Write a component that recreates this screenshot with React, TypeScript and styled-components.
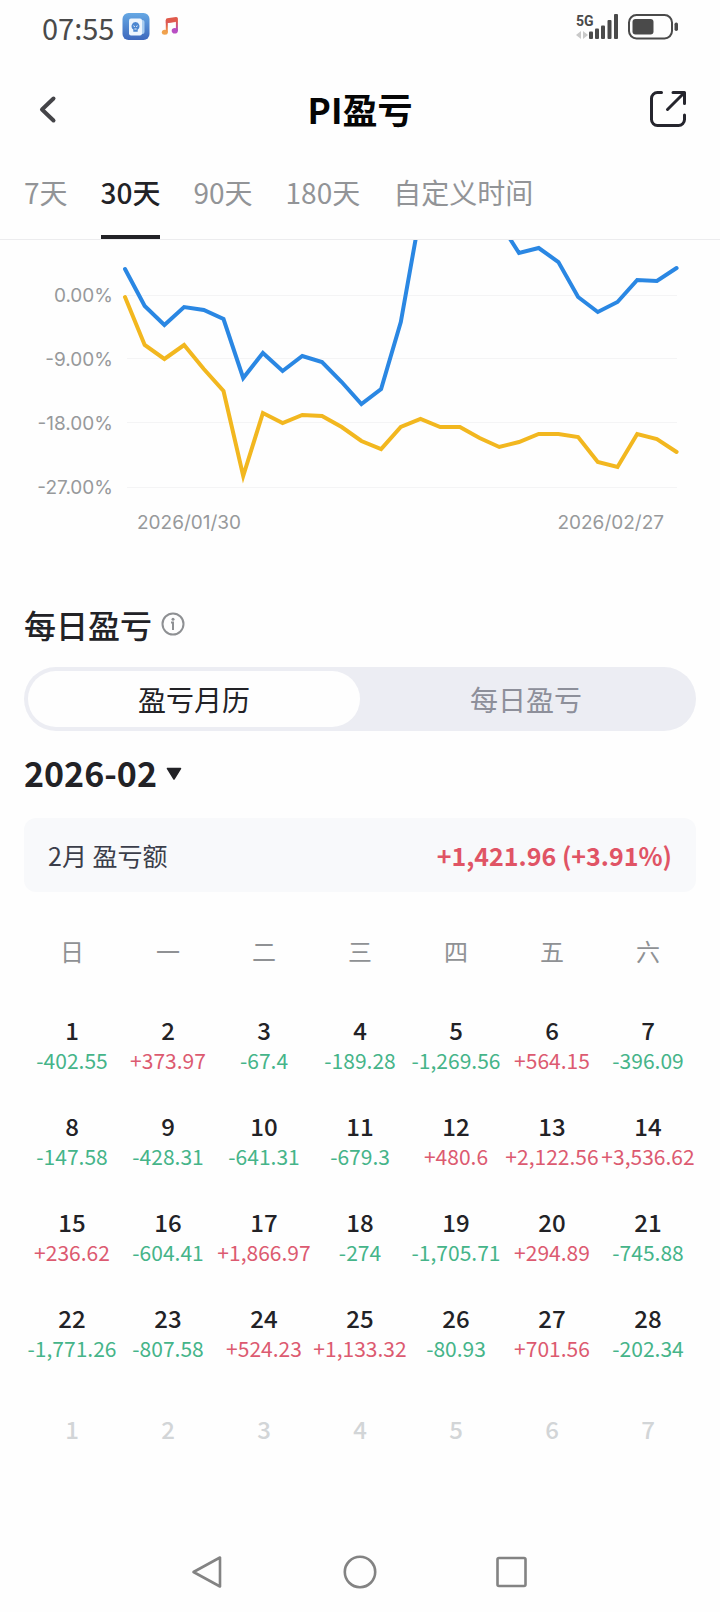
import React, { useState } from "react";
import styled, { createGlobalStyle } from "styled-components";

const GlobalStyle = createGlobalStyle`
  *, *::before, *::after { box-sizing: border-box; }
  body {
    margin: 0;
    background: #fefefe;
    color: #222226;
    font-family: "Noto Sans CJK SC", "Noto Sans", sans-serif;
  }
  button, select {
    margin: 0;
    padding: 0;
    border: 0;
    background: none;
    color: inherit;
    font: inherit;
    cursor: pointer;
  }
  svg { display: block; flex: none; }
`;

const Screen = styled.div`
  display: flex;
  flex-direction: column;
  min-height: 100vh;
`;

const StatusBar = styled.div`
  display: flex;
  align-items: center;
  height: 54px;
  padding: 0 41px 0 42px;
  gap: 8px;
`;

const Clock = styled.time`
  color: #4a4a4a;
  font-size: 29px;
  line-height: 40px;
  font-weight: 400;
`;

const StatusRight = styled.div`
  display: flex;
  align-items: center;
  gap: 9px;
  margin-left: auto;
`;

const Header = styled.header`
  display: grid;
  grid-template-columns: 1fr auto 1fr;
  align-items: center;
  height: 110px;
  padding: 0 32px;
`;

const Title = styled.h1`
  margin: 0;
  color: #050505;
  font-size: 35px;
  line-height: 48px;
  font-weight: 700;
`;

const IconButton = styled.button<{ $end?: boolean }>`
  display: flex;
  justify-self: ${(p) => (p.$end ? "end" : "start")};
`;

const Tabs = styled.nav`
  display: flex;
  gap: 33px;
  height: 76px;
  padding: 0 24px;
  border-bottom: 1px solid #ececee;
`;

const Tab = styled.button<{ $active: boolean }>`
  display: flex;
  align-items: flex-start;
  padding-top: 8px;
  border-bottom: 4px solid ${(p) => (p.$active ? "#222226" : "transparent")};
  color: ${(p) => (p.$active ? "#222226" : "#929497")};
  font-size: 28px;
  line-height: 40px;
  font-weight: ${(p) => (p.$active ? 500 : 400)};
  white-space: nowrap;
`;

const ChartSection = styled.section`
  color: #97999b;
  font-family: Inter, "Noto Sans CJK SC", sans-serif;
  font-size: 19px;
  line-height: 24px;
`;

const ChartBody = styled.div`
  display: grid;
  grid-template-columns: 89px 1fr;
  gap: 8px;
  padding: 0 39px 0 24px;
`;

const Axis = styled.div`
  display: flex;
  flex-direction: column;
  gap: 40px;
  padding-top: 44px;
  text-align: right;
`;

const Plot = styled.svg`
  width: 100%;
  height: 260px;
`;

const Dates = styled.div`
  display: flex;
  justify-content: space-between;
  padding: 11px 56px 0 137px;
`;

const Daily = styled.section`
  padding: 69px 24px 0;
`;

const HeadingRow = styled.div`
  display: flex;
  align-items: center;
  gap: 8px;
`;

const Heading = styled.h2`
  margin: 0;
  font-size: 32px;
  line-height: 40px;
  font-weight: 500;
`;

const Segmented = styled.div`
  display: grid;
  grid-template-columns: 1fr 1fr;
  height: 64px;
  margin-top: 23px;
  padding: 4px;
  border-radius: 32px;
  background: #ecedf3;
`;

const Segment = styled.button<{ $active: boolean }>`
  border-radius: 28px;
  background: ${(p) => (p.$active ? "#fefefe" : "transparent")};
  color: ${(p) => (p.$active ? "#222226" : "#8d8f9a")};
  font-size: 28px;
  line-height: 40px;
`;

const MonthRow = styled.div`
  display: flex;
  align-items: center;
  gap: 9px;
  margin-top: 22px;
`;

const MonthSelect = styled.select`
  appearance: none;
  height: 40px;
  font-size: 34px;
  line-height: 40px;
  font-weight: 700;
`;

const Summary = styled.div`
  display: flex;
  align-items: center;
  justify-content: space-between;
  height: 74px;
  margin-top: 25px;
  padding: 0 24px;
  border-radius: 12px;
  background: #f8f9fb;
  font-size: 25px;
  line-height: 32px;
`;

const SummaryLabel = styled.span`
  color: #3b3e4a;
`;

const SummaryValue = styled.strong`
  color: #e05465;
  font-weight: 700;
`;

const Calendar = styled.table`
  width: 100%;
  margin-top: 13px;
  border-collapse: collapse;
  table-layout: fixed;
  text-align: center;
`;

const Weekday = styled.th`
  height: 92px;
  padding: 0;
  color: #8f9194;
  font-size: 24px;
  line-height: 32px;
  font-weight: 400;
`;

const DayCell = styled.td`
  height: 96px;
  padding: 0;
  white-space: nowrap;
  vertical-align: middle;
`;

const DayNumber = styled.div<{ $faded?: boolean }>`
  color: ${(p) => (p.$faded ? "#d2d5d7" : "#222226")};
  font-size: 24px;
  line-height: 30px;
  font-weight: 500;
`;

const DayValue = styled.div<{ $gain: boolean }>`
  display: flex;
  justify-content: center;
  color: ${(p) => (p.$gain ? "#dc5a70" : "#45b489")};
  font-size: 21px;
  line-height: 30px;
`;

const SystemNav = styled.nav`
  display: flex;
  justify-content: center;
  gap: 104px;
  margin-top: auto;
`;

const NavButton = styled.button`
  display: flex;
  align-items: center;
  justify-content: center;
  width: 48px;
  height: 80px;
`;

const ranges = ["7天", "30天", "90天", "180天", "自定义时间"];
const segments = ["盈亏月历", "每日盈亏"];
const axisLabels = ["0.00%", "-9.00%", "-18.00%", "-27.00%"];
const weekdays = ["日", "一", "二", "三", "四", "五", "六"];

const weeks = [
  ["-402.55", "+373.97", "-67.4", "-189.28", "-1,269.56", "+564.15", "-396.09"],
  ["-147.58", "-428.31", "-641.31", "-679.3", "+480.6", "+2,122.56", "+3,536.62"],
  ["+236.62", "-604.41", "+1,866.97", "-274", "-1,705.71", "+294.89", "-745.88"],
  ["-1,771.26", "-807.58", "+524.23", "+1,133.32", "-80.93", "+701.56", "-202.34"],
];

const blueSeries = [
  29, 66, 85, 67, 70, 79, 138, 113, 131, 116, 122, 142, 164, 149, 82, -28, -60, -6, -40, -18, 13, 8,
  22, 57, 72, 62, 40, 41, 28,
];
const yellowSeries = [
  57, 105, 119, 105, 129, 151, 236, 173, 183, 175, 176, 187, 201, 209, 187, 179, 187, 187, 198, 207,
  202, 194, 194, 197, 222, 227, 194, 199, 212,
];

const toPoints = (ys: number[]) => ys.map((y, i) => `${(4 + i * 19.7).toFixed(1)},${y}`).join(" ");

function AppBadge() {
  return (
    <svg width="28" height="28" viewBox="0 0 28 28" aria-hidden="true">
      <defs>
        <linearGradient id="badge" x1="0" y1="0" x2="0" y2="1">
          <stop offset="0" stopColor="#66a8e4" />
          <stop offset="1" stopColor="#3d68bd" />
        </linearGradient>
      </defs>
      <rect x="0.5" y="0" width="27" height="27" rx="6" fill="url(#badge)" />
      <rect x="10" y="7" width="12.5" height="14" rx="2" fill="#a9cdf0" />
      <rect x="7" y="5.5" width="13" height="17" rx="2" fill="#edf5fd" />
      <path d="M13.5 9a4.200 4.200 0 0 0-2.200 7.600v2.200h4.400v-2.200a4.200 4.200 0 0 0-2.200-7.600z" fill="#4b86d0" />
      <path d="M11.400 12.800l1.500.8M15.600 12.800l-1.500.8M12.400 16h2.200" stroke="#edf5fd" strokeWidth="1" />
    </svg>
  );
}

function MusicBadge() {
  return (
    <svg width="28" height="28" viewBox="0 0 28 28" aria-hidden="true">
      <defs>
        <linearGradient id="noteLeft" x1="0" y1="0" x2="0" y2="1">
          <stop offset="0.4" stopColor="#e05a4c" />
          <stop offset="1" stopColor="#f0a24d" />
        </linearGradient>
        <linearGradient id="noteRight" x1="0" y1="0" x2="0" y2="1">
          <stop offset="0.3" stopColor="#e05a4c" />
          <stop offset="1" stopColor="#b04ac6" />
        </linearGradient>
      </defs>
      <ellipse cx="6.800" cy="19.300" rx="3" ry="2.500" fill="#f0a24d" />
      <ellipse cx="16.800" cy="17.800" rx="3.100" ry="2.800" fill="#b94fc4" />
      <path d="M7.800 7v12.300h2V10l8-1V6z" fill="url(#noteLeft)" />
      <path d="M7.800 7Q7.800 5.600 9.200 5.300L18 4Q19.900 3.900 19.900 5.600V17.800H17.900V8.600L7.800 10.200z" fill="url(#noteRight)" />
    </svg>
  );
}

function Signal() {
  return (
    <svg width="43" height="28" viewBox="0 0 43 28" aria-hidden="true">
      <text x="0" y="13" fill="#4a4a4a" fontFamily="Roboto, sans-serif" fontSize="14" fontWeight="700">
        5G
      </text>
      <path d="M5 18v8L0 22zM7 18v8l5-4z" fill="#c9c9c9" />
      <g fill="#4a4a4a">
        <rect x="13" y="18.500" width="4" height="7.500" rx="1" />
        <rect x="19" y="15.500" width="4" height="10.500" rx="1" />
        <rect x="25" y="12.500" width="4" height="13.500" rx="1" />
        <rect x="31.500" y="7" width="4" height="19" rx="1" />
        <rect x="38" y="1" width="4" height="25" rx="1" />
      </g>
    </svg>
  );
}

function Battery() {
  return (
    <svg width="51" height="28" viewBox="0 0 51 28" aria-hidden="true">
      <rect x="1" y="2" width="43" height="23.500" rx="7.500" fill="none" stroke="#4a4a4a" strokeWidth="2" />
      <rect x="4.500" y="6" width="21" height="15.500" rx="3" fill="#4a4a4a" />
      <rect x="46.500" y="9.500" width="3.500" height="8.500" rx="1.700" fill="#4a4a4a" />
    </svg>
  );
}

export default function App() {
  const [range, setRange] = useState("30天");
  const [segment, setSegment] = useState("盈亏月历");

  return (
    <Screen>
      <GlobalStyle />
      <StatusBar>
        <Clock>07:55</Clock>
        <AppBadge />
        <MusicBadge />
        <StatusRight>
          <Signal />
          <Battery />
        </StatusRight>
      </StatusBar>

      <Header>
        <IconButton aria-label="返回">
          <svg width="32" height="40" viewBox="0 0 32 40">
            <path d="M21.500 9.500L10 20.500l11.500 11" fill="none" stroke="#444448" strokeWidth="4" strokeLinecap="round" strokeLinejoin="round" />
          </svg>
        </IconButton>
        <Title>PI盈亏</Title>
        <IconButton $end aria-label="分享">
          <svg width="40" height="40" viewBox="0 0 40 40" fill="none" stroke="#25252d" strokeWidth="3" strokeLinecap="round" strokeLinejoin="round">
            <path d="M13.500 3.500H9.500a6 6 0 0 0-6 6v21a6 6 0 0 0 6 6h21a6 6 0 0 0 6-6v-4.500" />
            <path d="M25 3.500h11.500V14.500M36 4L19.500 20.500" />
          </svg>
        </IconButton>
      </Header>

      <Tabs>
        {ranges.map((r) => (
          <Tab key={r} $active={r === range} onClick={() => setRange(r)}>
            {r}
          </Tab>
        ))}
      </Tabs>

      <ChartSection>
        <ChartBody>
          <Axis>
            {axisLabels.map((l) => (
              <span key={l}>{l}</span>
            ))}
          </Axis>
          <Plot viewBox="0 0 560 260" preserveAspectRatio="none">
            {[55, 118, 182, 247].map((y) => (
              <rect key={y} x="6" y={y} width="550" height="1" fill="#f4f4f5" />
            ))}
            <g fill="none" strokeWidth="4" strokeLinecap="round" strokeMiterlimit="10">
              <polyline points={toPoints(yellowSeries)} stroke="#f2b71f" vectorEffect="non-scaling-stroke" />
              <polyline points={toPoints(blueSeries)} stroke="#2a87e3" vectorEffect="non-scaling-stroke" />
            </g>
          </Plot>
        </ChartBody>
        <Dates>
          <span>2026/01/30</span>
          <span>2026/02/27</span>
        </Dates>
      </ChartSection>

      <Daily>
        <HeadingRow>
          <Heading>每日盈亏</Heading>
          <IconButton aria-label="说明">
            <svg width="26" height="26" viewBox="0 0 26 26">
              <circle cx="13" cy="13" r="10.500" fill="none" stroke="#8e9093" strokeWidth="2" />
              <circle cx="13" cy="8.300" r="1.500" fill="#8e9093" />
              <path d="M11 11.500h2v7.500" fill="none" stroke="#8e9093" strokeWidth="2" />
            </svg>
          </IconButton>
        </HeadingRow>

        <Segmented>
          {segments.map((s) => (
            <Segment key={s} $active={s === segment} onClick={() => setSegment(s)}>
              {s}
            </Segment>
          ))}
        </Segmented>

        <MonthRow>
          <MonthSelect aria-label="月份" defaultValue="2026-02">
            <option>2026-02</option>
          </MonthSelect>
          <svg width="16" height="14" viewBox="0 0 16 14" aria-hidden="true">
            <path d="M1.500 2.500h13L8 13z" fill="#222226" stroke="#222226" strokeWidth="1.500" strokeLinejoin="round" />
          </svg>
        </MonthRow>

        <Summary>
          <SummaryLabel>2月 盈亏额</SummaryLabel>
          <SummaryValue>+1,421.96 (+3.91%)</SummaryValue>
        </Summary>

        <Calendar>
          <thead>
            <tr>
              {weekdays.map((d) => (
                <Weekday key={d} scope="col">
                  {d}
                </Weekday>
              ))}
            </tr>
          </thead>
          <tbody>
            {weeks.map((week, w) => (
              <tr key={w}>
                {week.map((value, d) => (
                  <DayCell key={d}>
                    <DayNumber>{w * 7 + d + 1}</DayNumber>
                    <DayValue $gain={value.startsWith("+")}>{value}</DayValue>
                  </DayCell>
                ))}
              </tr>
            ))}
            <tr>
              {weekdays.map((d, i) => (
                <DayCell key={d}>
                  <DayNumber $faded>{i + 1}</DayNumber>
                </DayCell>
              ))}
            </tr>
          </tbody>
        </Calendar>
      </Daily>

      <SystemNav>
        <NavButton aria-label="后退">
          <svg width="36" height="36" viewBox="0 0 36 36">
            <path d="M30 3.500v29L3.500 18z" fill="none" stroke="#838383" strokeWidth="2.600" strokeLinejoin="round" />
          </svg>
        </NavButton>
        <NavButton aria-label="主屏幕">
          <svg width="36" height="36" viewBox="0 0 36 36">
            <circle cx="18" cy="18" r="15.200" fill="none" stroke="#838383" strokeWidth="2.600" />
          </svg>
        </NavButton>
        <NavButton aria-label="最近任务">
          <svg width="36" height="36" viewBox="0 0 36 36">
            <rect x="3.500" y="4" width="28" height="28" rx="1.500" fill="none" stroke="#838383" strokeWidth="2.600" />
          </svg>
        </NavButton>
      </SystemNav>
    </Screen>
  );
}
